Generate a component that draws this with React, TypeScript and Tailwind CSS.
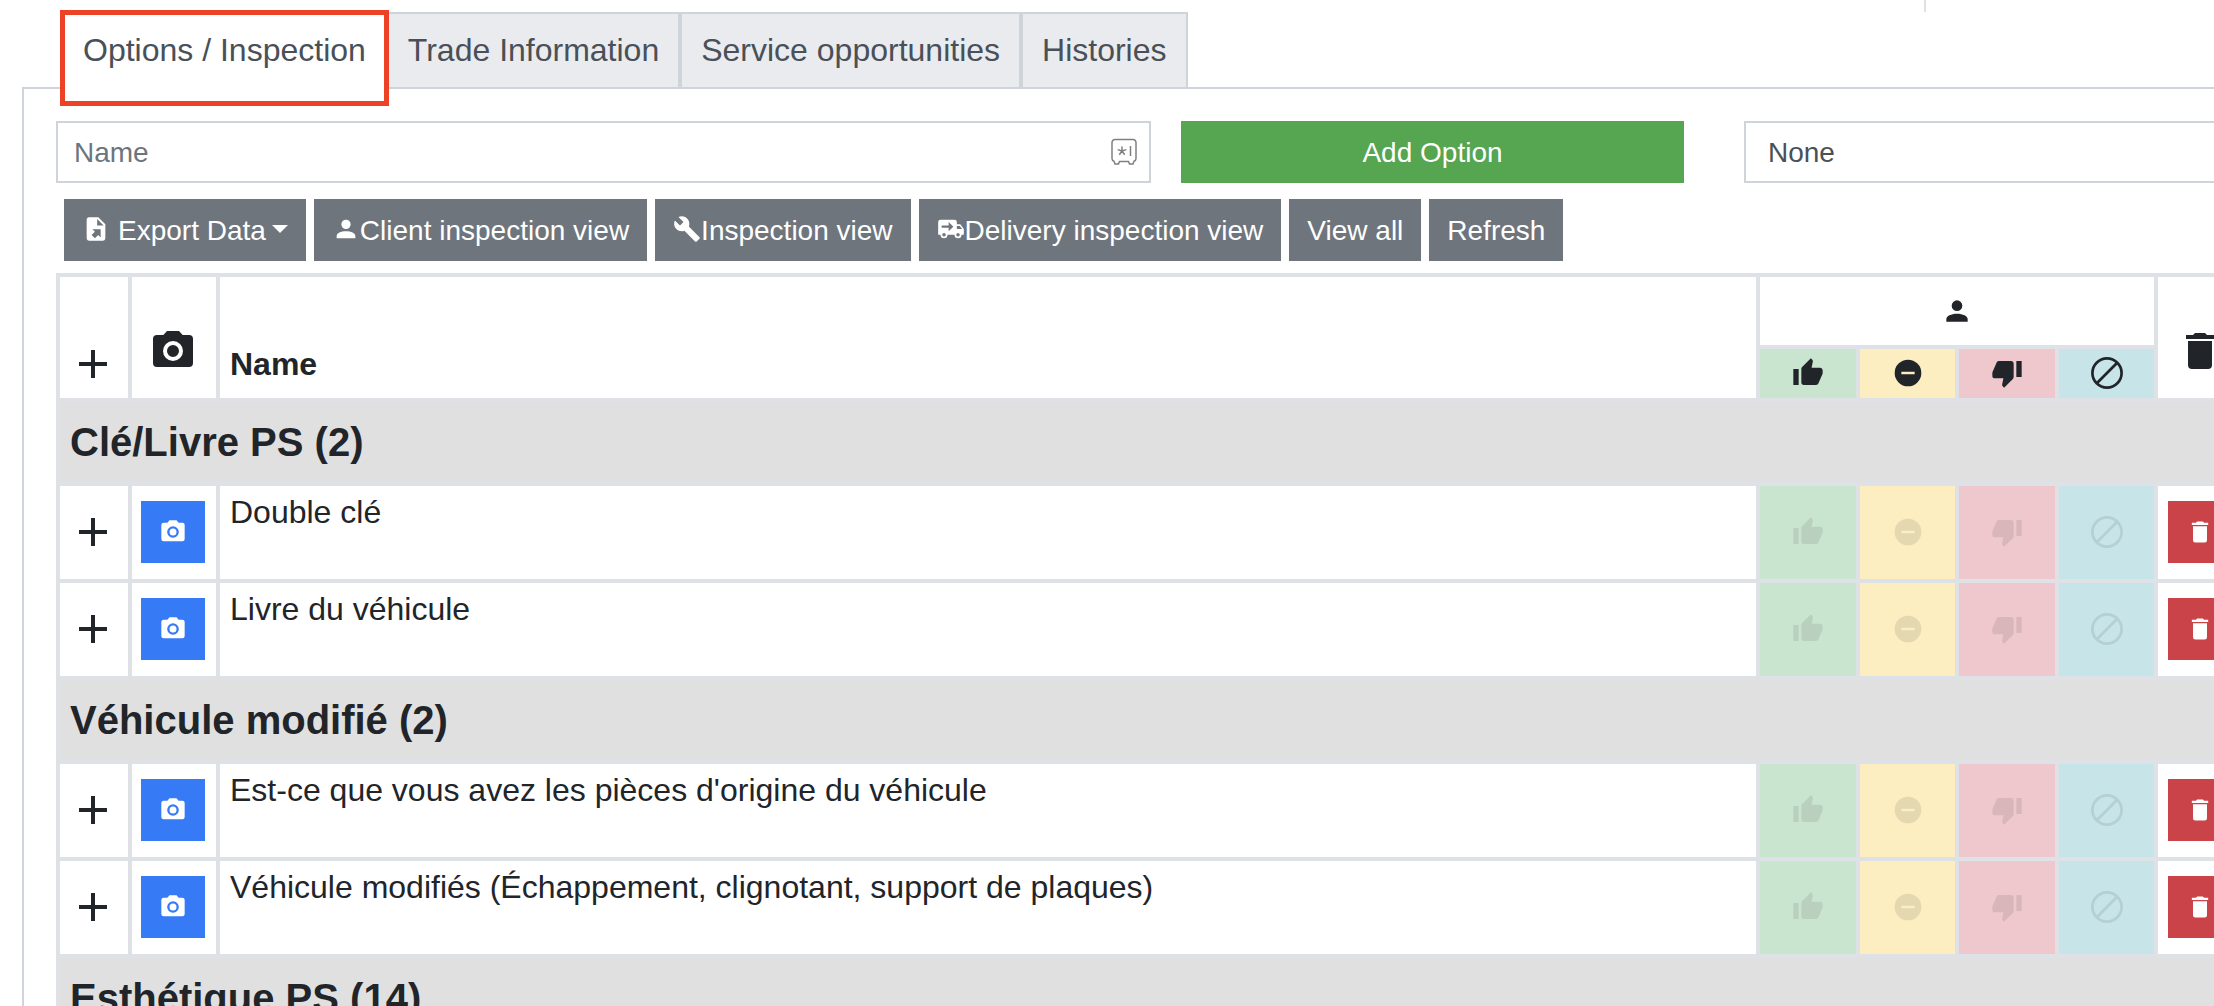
import React from 'react';

type IconProps = {
  path: string;
  className?: string;
};

const Icon = ({ path, className }: IconProps) => (
  <svg viewBox="0 0 24 24" fill="currentColor" aria-hidden="true" className={className}>
    <path d={path} />
  </svg>
);

const icons = {
  fileExport:
    'M6,2C4.89,2 4,2.9 4,4V20A2,2 0 0,0 6,22H18A2,2 0 0,0 20,20V8L14,2M13,3.5L18.5,9H13M8.93,12.22H16V19.29L13.88,17.17L11.05,20L8.22,17.17L11.05,14.35',
  account:
    'M12,4A4,4 0 0,1 16,8A4,4 0 0,1 12,12A4,4 0 0,1 8,8A4,4 0 0,1 12,4M12,14C16.42,14 20,15.79 20,18V20H4V18C4,15.79 7.58,14 12,14Z',
  wrench:
    'M22.7,19L13.6,9.9C14.5,7.6 14,4.9 12.1,3C10.1,1 7.1,0.6 4.7,1.7L9,6L6,9L1.6,4.7C0.4,7.1 0.9,10.1 2.9,12.1C4.8,14 7.5,14.5 9.8,13.6L18.9,22.7C19.3,23.1 19.9,23.1 20.3,22.7L22.6,20.4C23.1,20 23.1,19.3 22.7,19Z',
  truckDelivery:
    'M3,4A2,2 0 0,0 1,6V17H3A3,3 0 0,0 6,20A3,3 0 0,0 9,17H15A3,3 0 0,0 18,20A3,3 0 0,0 21,17H23V12L20,8H17V6A2,2 0 0,0 15,4M10,6L14,10L10,14V11H4V9H10M17,9.5H19.5L21.47,12H17M6,15.5A1.5,1.5 0 0,1 7.5,17A1.5,1.5 0 0,1 6,18.5A1.5,1.5 0 0,1 4.5,17A1.5,1.5 0 0,1 6,15.5M18,15.5A1.5,1.5 0 0,1 19.5,17A1.5,1.5 0 0,1 18,18.5A1.5,1.5 0 0,1 16.5,17A1.5,1.5 0 0,1 18,15.5Z',
  plus: 'M19,13H13V19H11V13H5V11H11V5H13V11H19V13Z',
  camera:
    'M9,2L7.17,4H4A2,2 0 0,0 2,6V18A2,2 0 0,0 4,20H20A2,2 0 0,0 22,18V6A2,2 0 0,0 20,4H16.83L15,2M12,7A5,5 0 0,1 17,12A5,5 0 0,1 12,17A5,5 0 0,1 7,12A5,5 0 0,1 12,7M12,9A3,3 0 0,0 9,12A3,3 0 0,0 12,15A3,3 0 0,0 15,12A3,3 0 0,0 12,9Z',
  trash: 'M19,4H15.5L14.5,3H9.5L8.5,4H5V6H19M6,19A2,2 0 0,0 8,21H16A2,2 0 0,0 18,19V7H6V19Z',
  thumbUp:
    'M23,10C23,8.89 22.1,8 21,8H14.68L15.64,3.43C15.66,3.33 15.67,3.22 15.67,3.11C15.67,2.7 15.5,2.32 15.23,2.05L14.17,1L7.59,7.58C7.22,7.95 7,8.45 7,9V19A2,2 0 0,0 9,21H18C18.83,21 19.54,20.5 19.84,19.78L22.86,12.73C22.95,12.5 23,12.26 23,12V10M1,21H5V9H1V21Z',
  thumbDown:
    'M19,15H23V3H19M15,3H6C5.17,3 4.46,3.5 4.16,4.22L1.14,11.27C1.05,11.5 1,11.74 1,12V14A2,2 0 0,0 3,16H9.31L8.36,20.57C8.34,20.67 8.33,20.77 8.33,20.88C8.33,21.3 8.5,21.67 8.77,21.94L9.83,23L16.41,16.41C16.78,16.05 17,15.55 17,15V5C17,3.89 16.1,3 15,3Z',
  minusCircle: 'M17,13H7V11H17M12,2A10,10 0 0,0 2,12A10,10 0 0,0 12,22A10,10 0 0,0 22,12A10,10 0 0,0 12,2Z',
};

const NotApplicableIcon = () => (
  <svg viewBox="0 0 32 32" fill="none" stroke="currentColor" strokeWidth="2.7" aria-hidden="true" className="size-8">
    <circle cx="16" cy="16" r="14.6" />
    <path d="M5.8 26.2L26.2 5.8" />
  </svg>
);

const ratings = [
  { id: 'good', label: 'Good', color: 'bg-[#cae5cf]', icon: <Icon path={icons.thumbUp} className="size-8" /> },
  { id: 'neutral', label: 'Neutral', color: 'bg-[#fceec0]', icon: <Icon path={icons.minusCircle} className="size-8" /> },
  { id: 'bad', label: 'Bad', color: 'bg-[#eec8cc]', icon: <Icon path={icons.thumbDown} className="size-8" /> },
  { id: 'na', label: 'Not applicable', color: 'bg-[#c7e4e9]', icon: <NotApplicableIcon /> },
];

const tabs = ['Options / Inspection', 'Trade Information', 'Service opportunities', 'Histories'];

const sections = [
  { name: 'Clé/Livre PS', count: 2, options: ['Double clé', 'Livre du véhicule'] },
  {
    name: 'Véhicule modifié',
    count: 2,
    options: [
      "Est-ce que vous avez les pièces d'origine du véhicule",
      'Véhicule modifiés (Échappement, clignotant, support de plaques)',
    ],
  },
  { name: 'Esthétique PS', count: 14, options: [] },
];

const cell = 'border-4 border-[#dee2e6]';
const toolButton = 'flex h-[62px] items-center bg-[#6e757d] px-[18px] pt-0.5 text-[28px] whitespace-nowrap text-white';

const App = () => {
  return (
    <main className="h-screen overflow-hidden bg-white font-['Liberation_Sans',Arial,sans-serif] text-[32px] leading-[48px] text-[#212529]">
      <div className="h-3 w-[87%] border-r-2 border-[#dee2e6]" />

      <nav className="relative z-10 ml-[62px] flex">
        {tabs.map((tab, index) =>
          index === 0 ? (
            <a key={tab} href="#options" className="relative border-2 border-b-0 border-[#ced4da] bg-white px-[19px] pt-3 pb-[15px] text-[#495057]">
              <span className="absolute -top-1 -right-1 -bottom-[17px] -left-1 border-[5px] border-[#ee4226] bg-white" />
              <span className="relative">{tab}</span>
            </a>
          ) : (
            <a key={tab} href="#tab" className="border-2 border-[#ced4da] bg-[#e9ebef] px-[19px] pt-3 pb-[13px] text-[#495057]">
              {tab}
            </a>
          ),
        )}
      </nav>

      <section className="-mt-0.5 ml-[22px] border-t-2 border-l-2 border-[#ced4da] pt-8 pl-8">
        <form className="grid grid-cols-[1125fr_563fr_470fr] text-[28px]">
          <label className="relative mr-[30px] flex">
            <input
              type="text"
              placeholder="Name"
              aria-label="Name"
              className="h-[62px] w-full border-2 border-[#ced4da] px-4 pt-0.5 placeholder:text-[#6c757d]"
            />
            <svg viewBox="0 0 26 28" fill="none" stroke="#808080" strokeWidth="1.5" aria-hidden="true" className="absolute top-[17px] right-3.5 h-7 w-[26px]">
              <path d="M4 1.5h18a3 3 0 0 1 3 3v16a3 3 0 0 1-2 2.8l-1 2.7h-3.500l-1-2.600h-9l-1 2.600h-3.500l-1-2.700a3 3 0 0 1-2-2.800v-16a3 3 0 0 1 3-3z" />
              <path d="M11 8.500v4.500M11 13l-4.300-1.400M11 13l4.300-1.400M11 13l-2.700 3.700M11 13l2.700 3.700M19.500 8v10" />
            </svg>
          </label>
          <button type="button" className="mr-[60px] h-[62px] bg-[#55a551] pt-0.5 text-white">
            Add Option
          </button>
          <select aria-label="Template" className="h-[62px] min-w-0 appearance-none border-2 border-r-0 border-[#ced4da] bg-white px-[22px] pt-0.5 text-[#495057]">
            <option>None</option>
          </select>
        </form>

        <div className="mt-4 ml-2 flex gap-2">
          <button type="button" className={toolButton}>
            <Icon path={icons.fileExport} className="mr-2 mb-1 size-7" />
            Export Data
            <svg viewBox="0 0 16 8" fill="currentColor" aria-hidden="true" className="mb-1 ml-1.5 h-2 w-4">
              <path d="M0 0h16L8 8z" />
            </svg>
          </button>
          <button type="button" className={toolButton}>
            <Icon path={icons.account} className="mb-1 size-7" />
            Client inspection view
          </button>
          <button type="button" className={toolButton}>
            <Icon path={icons.wrench} className="mb-1 size-7" />
            Inspection view
          </button>
          <button type="button" className={toolButton}>
            <Icon path={icons.truckDelivery} className="mb-1 size-7" />
            Delivery inspection view
          </button>
          <button type="button" className={toolButton}>View all</button>
          <button type="button" className={toolButton}>Refresh</button>
        </div>

        {/* The last column runs past the right edge of the window */}
        <table className="mt-3 w-[calc(100%+32px)] table-fixed border-collapse">
          <colgroup>
            <col className="w-[72px]" />
            <col className="w-[88px]" />
            <col />
            <col className="w-[100px]" />
            <col className="w-[99px]" />
            <col className="w-[100px]" />
            <col className="w-[99px]" />
            <col className="w-[88px]" />
          </colgroup>
          <thead>
            <tr className="h-[72px]">
              <th rowSpan={2} className={`${cell} pr-0.5 pb-2.5 align-bottom`}>
                <Icon path={icons.plus} className="mx-auto size-12" />
              </th>
              <th rowSpan={2} className={`${cell} pr-0.5 pb-[23px] align-bottom`}>
                <Icon path={icons.camera} className="mx-auto size-12" />
              </th>
              <th rowSpan={2} className={`${cell} px-2.5 pb-2.5 text-left align-bottom`}>
                Name
              </th>
              <th colSpan={4} className={cell}>
                <Icon path={icons.account} className="mx-auto size-8" />
              </th>
              <th rowSpan={2} className={`${cell} pb-[23px] align-bottom`}>
                <Icon path={icons.trash} className="mx-auto size-12" />
              </th>
            </tr>
            <tr className="h-[53px]">
              {ratings.map((rating) => (
                <th key={rating.id} aria-label={rating.label} className={`${cell} ${rating.color} pb-0.5`}>
                  <div className="flex justify-center">{rating.icon}</div>
                </th>
              ))}
            </tr>
          </thead>
          <tbody>
            {sections.map((section) => (
              <React.Fragment key={section.name}>
                <tr className="h-[84px]">
                  <th colSpan={8} className={`${cell} bg-[#e0e0e0] px-2.5 text-left text-[40px]`}>
                    {section.name} ({section.count})
                  </th>
                </tr>
                {section.options.map((option) => (
                  <tr key={option} className="h-[97px]">
                    <td className={`${cell} pr-0.5 pb-0.5`}>
                      <button type="button" aria-label="Add" className="mx-auto block">
                        <Icon path={icons.plus} className="size-12" />
                      </button>
                    </td>
                    <td className={`${cell} pr-0.5 pb-0.5`}>
                      <button type="button" aria-label="Add photo" className="mx-auto flex h-[62px] w-16 items-center justify-center bg-[#367af6] text-white">
                        <Icon path={icons.camera} className="size-7" />
                      </button>
                    </td>
                    <td className={`${cell} px-2.5 pt-0.5 align-top`}>{option}</td>
                    {ratings.map((rating) => (
                      <td key={rating.id} className={`${cell} ${rating.color} pb-0.5`}>
                        <button type="button" aria-label={rating.label} className="mx-auto block opacity-10">
                          {rating.icon}
                        </button>
                      </td>
                    ))}
                    <td className={`${cell} pb-0.5`}>
                      <button type="button" aria-label="Delete" className="mx-auto flex h-[62px] w-16 items-center justify-center bg-[#c94348] text-white">
                        <Icon path={icons.trash} className="size-7" />
                      </button>
                    </td>
                  </tr>
                ))}
              </React.Fragment>
            ))}
          </tbody>
        </table>
      </section>
    </main>
  );
};

export default App;
